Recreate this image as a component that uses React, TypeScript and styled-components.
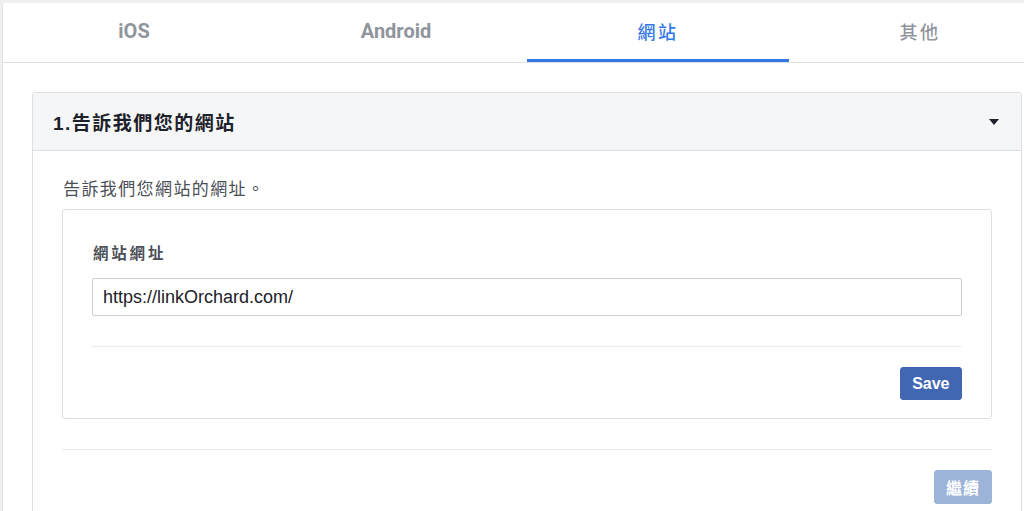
import styled, { createGlobalStyle } from 'styled-components'

const GlobalStyle = createGlobalStyle`
  html, body {
    margin: 0;
    padding: 0;
    background: #efefef;
    overflow: hidden;
  }
  body {
    font-family: "Liberation Sans", "Noto Sans CJK TC", sans-serif;
  }
  * { box-sizing: border-box; }
`

const Page = styled.div`
  width: 1024px;
  height: 511px;
  padding: 3px 0 0 2px;
  overflow: hidden;
`

const Panel = styled.div`
  width: 1060px;
  min-height: 100%;
  background: #fff;
  border-left: 1px solid #e3e3e3;
`

const Tabs = styled.div`
  display: flex;
  height: 60px;
  border-bottom: 1px solid #dddfe2;
`

const Tab = styled.div<{ $active?: boolean; $cjk?: boolean }>`
  flex: 0 0 262px;
  display: flex;
  align-items: center;
  justify-content: center;
  position: relative;
  font-family: "Roboto", "Noto Sans CJK TC", sans-serif;
  font-size: ${p => (p.$cjk ? '18px' : '20px')};
  font-weight: ${p => (p.$cjk ? 500 : 700)};
  letter-spacing: ${p => (p.$cjk ? '2.5px' : '0')};
  color: ${p => (p.$active ? '#3578e5' : '#90949c')};
  padding-bottom: 3px;

  &::after {
    content: '';
    display: ${p => (p.$active ? 'block' : 'none')};
    position: absolute;
    left: 0;
    right: 0;
    bottom: 0;
    height: 3px;
    background: #3578e5;
  }
`

const Content = styled.div`
  padding: 29px 0 0 29px;
`

const Card = styled.div`
  width: 990px;
  border: 1px solid #dddfe2;
  border-radius: 3px;
`

const CardHeader = styled.div`
  display: flex;
  align-items: center;
  justify-content: space-between;
  height: 58px;
  padding: 0 22px 0 20px;
  background: #f5f6f7;
  border-bottom: 1px solid #dddfe2;
`

const CardTitle = styled.div`
  font-family: "Liberation Sans", "Noto Sans CJK TC", sans-serif;
  font-size: 19px;
  font-weight: 700;
  letter-spacing: 1.5px;
  color: #1d2129;
`

const Caret = styled.svg`
  width: 10px;
  height: 6px;
  display: block;
`

const CardBody = styled.div`
  padding: 28px 29px 40px 29px;
`

const Intro = styled.div`
  font-size: 17px;
  line-height: 22px;
  letter-spacing: 1.4px;
  color: #4b4f56;
  margin-bottom: 8px;
  padding-left: 1px;
`

const Box = styled.div`
  border: 1px solid #dddfe2;
  border-radius: 3px;
  padding: 34px 29px 18px 29px;
`

const Label = styled.div`
  font-size: 15.5px;
  line-height: 20px;
  font-weight: 700;
  letter-spacing: 2.8px;
  color: #4b4f56;
  margin-bottom: 14px;
  padding-left: 1px;
`

const Input = styled.div`
  height: 38px;
  border: 1px solid #ccd0d5;
  border-radius: 2px;
  display: flex;
  align-items: center;
  padding: 0 10px;
  font-size: 18px;
  color: #1d2129;
`

const Divider = styled.div<{ $gap: number }>`
  height: 1px;
  background: #e9ebee;
  margin: ${p => p.$gap}px 0 20px 0;
`

const Actions = styled.div`
  display: flex;
  justify-content: flex-end;
`

const Button = styled.div<{ $disabled?: boolean }>`
  display: flex;
  align-items: center;
  justify-content: center;
  height: ${p => (p.$disabled ? '34px' : '33px')};
  padding: 0 ${p => (p.$disabled ? '11px' : '11.5px')};
  border-radius: 3px;
  background: ${p => (p.$disabled ? '#9cb4d8' : '#4267b2')};
  border: 1px solid ${p => (p.$disabled ? '#9cb4d8' : '#4267b2')};
  color: #fff;
  font-size: 16px;
  font-weight: 700;
  letter-spacing: ${p => (p.$disabled ? '1px' : '0')};
`

export default function App() {
  return (
    <>
      <GlobalStyle />
      <Page>
        <Panel>
          <Tabs>
            <Tab>iOS</Tab>
            <Tab>Android</Tab>
            <Tab $active $cjk>網站</Tab>
            <Tab $cjk>其他</Tab>
          </Tabs>
          <Content>
            <Card>
              <CardHeader>
                <CardTitle>1.告訴我們您的網站</CardTitle>
                <Caret viewBox="0 0 10 6">
                  <path d="M0 0 L10 0 L5 6 Z" fill="#1d2129" />
                </Caret>
              </CardHeader>
              <CardBody>
                <Intro>告訴我們您網站的網址。</Intro>
                <Box>
                  <Label>網站網址</Label>
                  <Input>https://linkOrchard.com/</Input>
                  <Divider $gap={30} />
                  <Actions>
                    <Button>Save</Button>
                  </Actions>
                </Box>
                <Divider $gap={30} />
                <Actions>
                  <Button $disabled>繼續</Button>
                </Actions>
              </CardBody>
            </Card>
          </Content>
        </Panel>
      </Page>
    </>
  )
}
